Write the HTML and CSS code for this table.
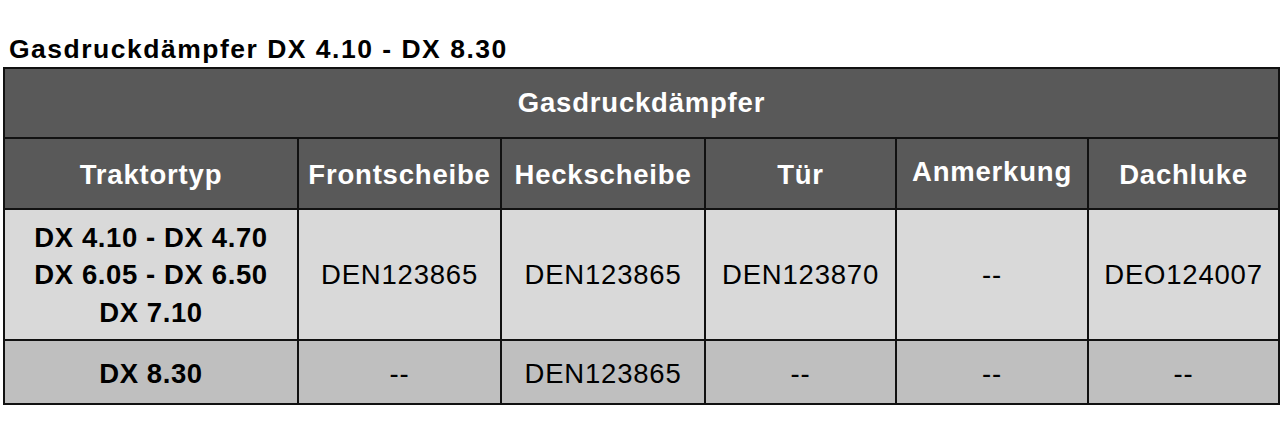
FILE: index.html
```html
<!DOCTYPE html>
<html lang="de">
<head>
<meta charset="utf-8">
<title>Gasdruckdämpfer DX 4.10 - DX 8.30</title>
<link rel="stylesheet" href="styles.css">
</head>
<body>
<div class="page">
  <h1 class="title">Gasdruckdämpfer DX 4.10 - DX 8.30</h1>
  <table class="parts">
    <colgroup>
      <col class="c-type">
      <col class="c-front">
      <col class="c-rear">
      <col class="c-door">
      <col class="c-note">
      <col class="c-roof">
    </colgroup>
    <thead>
      <tr class="row-caption">
        <th colspan="6">Gasdruckdämpfer</th>
      </tr>
      <tr class="row-head">
        <th>Traktortyp</th>
        <th>Frontscheibe</th>
        <th>Heckscheibe</th>
        <th>Tür</th>
        <th><span class="raised">Anmerkung</span></th>
        <th>Dachluke</th>
      </tr>
    </thead>
    <tbody>
      <tr class="row-light">
        <td class="type">DX 4.10 - DX 4.70<br>DX 6.05 - DX 6.50<br>DX 7.10</td>
        <td>DEN123865</td>
        <td>DEN123865</td>
        <td>DEN123870</td>
        <td>--</td>
        <td>DEO124007</td>
      </tr>
      <tr class="row-dark">
        <td class="type">DX 8.30</td>
        <td>--</td>
        <td>DEN123865</td>
        <td>--</td>
        <td>--</td>
        <td>--</td>
      </tr>
    </tbody>
  </table>
</div>
</body>
</html>
```
FILE: styles.css
```css
html, body {
  margin: 0;
  padding: 0;
  background: #ffffff;
}

body {
  font-family: "Liberation Sans", Arial, sans-serif;
  color: #000000;
}

.page {
  padding: 34px 0 0 3px;
}

.title {
  margin: 0 0 3px 6px;
  font-size: 26.5px;
  line-height: 30px;
  font-weight: bold;
  letter-spacing: 1.5px;
  color: #000000;
}

.parts {
  border-collapse: collapse;
  table-layout: fixed;
  width: 1277px;
  border: 2px solid #111111;
}

.c-type { width: 294px; }
.c-front { width: 203px; }
.c-rear { width: 204px; }
.c-door { width: 191px; }
.c-note { width: 192px; }
.c-roof { width: 191px; }

.parts th,
.parts td {
  border: 2px solid #111111;
  padding: 0;
  text-align: center;
  vertical-align: middle;
  font-size: 27.5px;
  letter-spacing: 0.8px;
  white-space: nowrap;
}

.parts th {
  background: #595959;
  color: #ffffff;
  font-weight: bold;
}

.row-caption th { height: 68px; }

.row-head th {
  height: 66px;
  padding-top: 3px;
}

.raised {
  display: inline-block;
  position: relative;
  top: -3px;
}

.parts td {
  font-weight: normal;
  color: #000000;
}

.parts td.type {
  font-weight: bold;
  line-height: 37.5px;
  letter-spacing: 0.6px;
}

.row-light td {
  background: #d9d9d9;
  height: 128px;
  padding-top: 1px;
}

.row-dark td {
  background: #bfbfbf;
  height: 59px;
  padding-top: 3px;
}
```
